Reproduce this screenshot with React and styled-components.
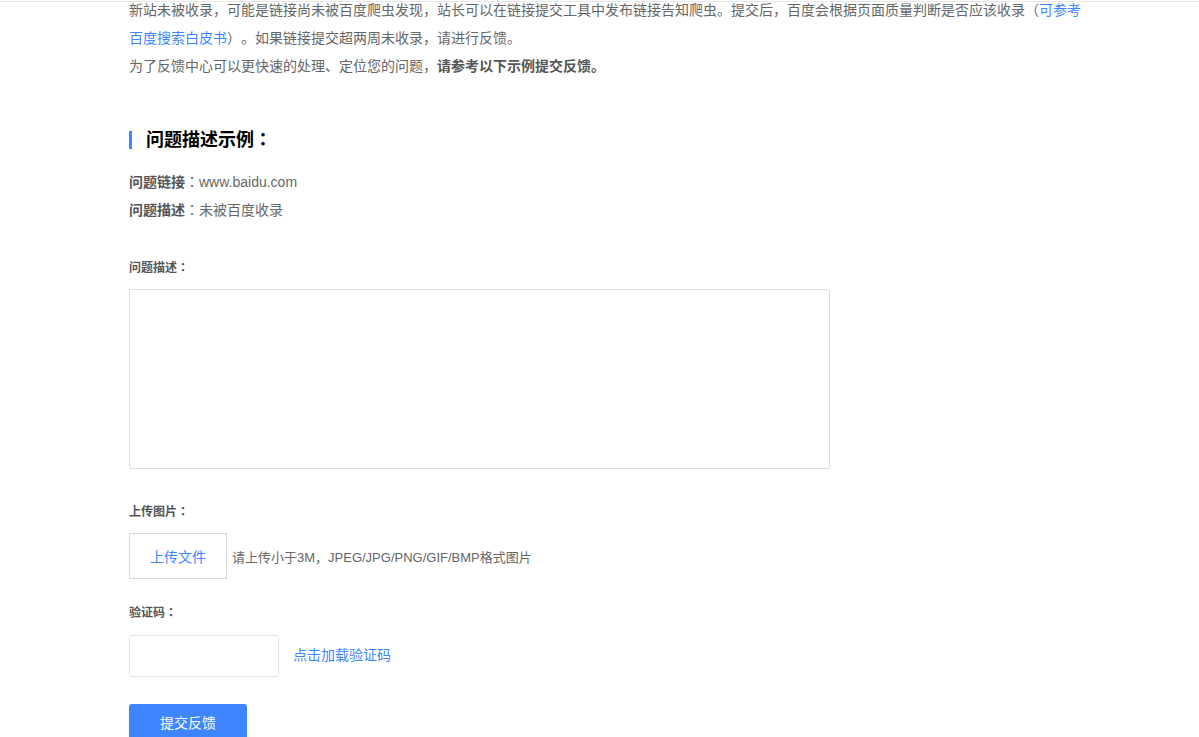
import React from 'react'
import styled, { createGlobalStyle } from 'styled-components';

const Global=createGlobalStyle`
body{
  margin:0;
  background:#fff;
  font-family:"Liberation Sans","Noto Sans CJK SC",sans-serif;
  color:#666;
  overflow:hidden;
  text-spacing-trim:space-all;
}
`
const TopLine=styled.div`
position:fixed;
top:1px;left:0;right:0;
height:1px;
background:#e6e6e6;
`
const Page=styled.div`
padding-left:129px;
margin-top:-4px;
width:960px;
`
const Intro=styled.div`
font-size:14px;
line-height:28px;
color:#666;
`
const Link=styled.a`
color:#3e86ff;
text-decoration:none;
cursor:pointer;
`
const Strong=styled.b`
color:#555;
`
// centred full-width colon, like the reference font draws it
const Colon=styled.span`
font-family:"Liberation Sans","Noto Sans CJK TC",sans-serif;
`
const Heading=styled.h2`
margin:48px 0 0;
font-size:18px;
line-height:24px;
color:#000;
font-weight:bold;
display:flex;
align-items:center;
&::before{
  content:"";
  width:3px;
  height:18px;
  background:#3e86ff;
  margin-right:14px;
}
`
const Examples=styled.div`
margin-top:16px;
font-size:14px;
line-height:28px;
`
const Label=styled.div`
margin-top:${p=>p.top}px;
font-size:12px;
line-height:20px;
font-weight:bold;
color:#555;
`
const TextArea=styled.textarea`
display:block;
margin-top:11px;
width:701px;
height:180px;
box-sizing:border-box;
border:1px solid #ddd;
border-radius:2px;
resize:none;
outline:none;
`
const Row=styled.div`
display:flex;
align-items:center;
margin-top:${p=>p.top}px;
font-size:14px;
`
const UploadBtn=styled.div`
width:98px;
height:46px;
box-sizing:border-box;
border:1px solid #d9d9d9;
color:#3e86ff;
display:flex;
align-items:center;
justify-content:center;
margin-right:5px;
cursor:pointer;
`
const Hint=styled.span`
color:#666;
font-size:13px;
`
const CodeInput=styled.input`
width:150px;
height:42px;
box-sizing:border-box;
border:1px solid #e5e5e5;
border-radius:3px;
outline:none;
margin-right:14px;
`
const CodeLink=styled(Link)`
margin-bottom:4px;
`
const Submit=styled.button`
display:block;
margin-top:27px;
width:118px;
height:36px;
border:0;
border-radius:3px;
background:#3e86ff;
color:#fff;
font-size:14px;
font-family:inherit;
cursor:pointer;
`

const App=()=>{
    return (
        <>
            <Global/>
            <TopLine/>
            <Page>
                <Intro>
                    新站未被收录，可能是链接尚未被百度爬虫发现，站长可以在链接提交工具中发布链接告知爬虫。提交后，百度会根据页面质量判断是否应该收录（<Link>可参考百度搜索白皮书</Link>）。如果链接提交超两周未收录，请进行反馈。<br/>
                    为了反馈中心可以更快速的处理、定位您的问题，<Strong>请参考以下示例提交反馈。</Strong>
                </Intro>
                <Heading>问题描述示例<Colon>：</Colon></Heading>
                <Examples>
                    <div><Strong>问题链接</Strong><Colon>：</Colon>www.baidu.com</div>
                    <div><Strong>问题描述</Strong><Colon>：</Colon>未被百度收录</div>
                </Examples>
                <Label top={34}>问题描述<Colon>：</Colon></Label>
                <TextArea/>
                <Label top={33}>上传图片<Colon>：</Colon></Label>
                <Row top={11}>
                    <UploadBtn>上传文件</UploadBtn>
                    <Hint>请上传小于3M，JPEG/JPG/PNG/GIF/BMP格式图片</Hint>
                </Row>
                <Label top={24}>验证码<Colon>：</Colon></Label>
                <Row top={12}>
                    <CodeInput/>
                    <CodeLink>点击加载验证码</CodeLink>
                </Row>
                <Submit>提交反馈</Submit>
            </Page>
        </>
    )
}

export default App;
